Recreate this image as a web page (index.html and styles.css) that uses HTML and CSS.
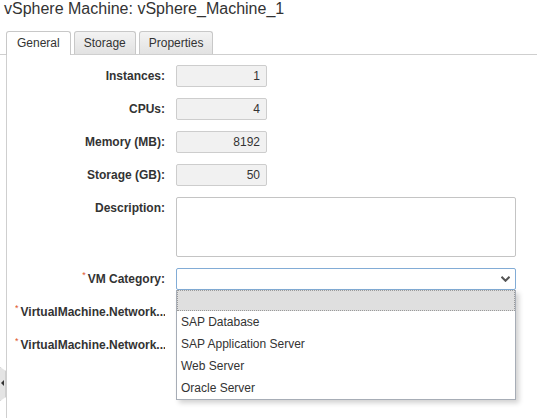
FILE: index.html
```html
<!DOCTYPE html>
<html>
<head>
<meta charset="utf-8">
<link rel="stylesheet" href="styles.css">
</head>
<body>
<div class="page">
  <h1 class="title">vSphere Machine: vSphere_Machine_1</h1>
  <div class="tabs">
    <div class="tab active">General</div>
    <div class="tab">Storage</div>
    <div class="tab">Properties</div>
  </div>
  <div class="panel">
    <div class="form">
      <label class="lbl">Instances:</label>
      <div class="input">1</div>
      <label class="lbl">CPUs:</label>
      <div class="input">4</div>
      <label class="lbl">Memory (MB):</label>
      <div class="input">8192</div>
      <label class="lbl">Storage (GB):</label>
      <div class="input">50</div>
      <label class="lbl">Description:</label>
      <div class="textarea"></div>
      <label class="lbl"><span class="req">*</span>VM Category:</label>
      <div class="select-wrap">
        <div class="select">
          <svg class="chev" width="9" height="6" viewBox="0 0 9 6"><path d="M0.5 0.8 L4.5 4.8 L8.5 0.8" fill="none" stroke="#555" stroke-width="2"/></svg>
        </div>
        <ul class="dropdown">
          <li class="opt empty"></li>
          <li class="opt">SAP Database</li>
          <li class="opt">SAP Application Server</li>
          <li class="opt">Web Server</li>
          <li class="opt">Oracle Server</li>
        </ul>
      </div>
      <label class="lbl"><span class="req">*</span>VirtualMachine.Network...</label>
      <div class="field"></div>
      <label class="lbl"><span class="req">*</span>VirtualMachine.Network...</label>
      <div class="field"></div>
    </div>
  </div>
  <div class="handle"><span class="arrow"></span></div>
</div>
</body>
</html>
```

FILE: styles.css
```css
html, body {
  margin: 0;
  padding: 0;
  background: #fff;
}
body {
  font-family: "Liberation Sans", Arial, sans-serif;
  color: #333;
  font-size: 12px;
}
.page {
  position: relative;
  height: 418px;
  display: flex;
  flex-direction: column;
  overflow: hidden;
}
.title {
  margin: 0;
  padding: 0 4px;
  font-size: 16px;
  font-weight: normal;
  line-height: 18px;
  color: #333;
}
.tabs {
  display: flex;
  gap: 3px;
  margin-top: 13px;
  padding-left: 6px;
  border-bottom: 1px solid #cfcfcf;
}
.tab {
  height: 22px;
  line-height: 22px;
  padding: 0 9px;
  border: 1px solid #c8c8c8;
  border-bottom: none;
  border-radius: 3px 3px 0 0;
  background: linear-gradient(#f3f3f3, #e2e2e2);
  font-size: 12px;
  color: #333;
}
.tab.active {
  background: #fff;
  height: 23px;
  margin-bottom: -1px;
  padding: 0 10px;
}
.panel {
  flex: 1;
  margin-left: 6px;
  border-left: 1px solid #cfcfcf;
  padding-top: 10px;
}
.form {
  display: grid;
  grid-template-columns: 150px 340px;
  column-gap: 11px;
  row-gap: 11px;
  padding-left: 8px;
  align-items: start;
}
.lbl {
  font-weight: bold;
  font-size: 12px;
  line-height: 22px;
  text-align: right;
  white-space: nowrap;
  overflow: hidden;
  color: #333;
}
.req {
  color: #e0542a;
  font-size: 9px;
  font-weight: normal;
  vertical-align: top;
  line-height: 14px;
  margin-right: 2px;
}
.input {
  width: 91px;
  height: 22px;
  box-sizing: border-box;
  border: 1px solid #cdcdcd;
  border-radius: 2px;
  background: #f1f1f1;
  text-align: right;
  padding: 0 6px;
  line-height: 20px;
  font-size: 12px;
  color: #333;
}
.textarea {
  width: 340px;
  height: 60px;
  box-sizing: border-box;
  border: 1px solid #c4c4c4;
  border-radius: 2px;
  background: #fff;
}
.select-wrap {
  position: relative;
  width: 340px;
}
.select {
  height: 22px;
  box-sizing: border-box;
  border: 1px solid #82acd6;
  border-radius: 2px;
  background: #fff;
  display: flex;
  align-items: center;
  justify-content: flex-end;
  padding-right: 5px;
}
.chev {
  display: block;
}
.dropdown {
  position: absolute;
  top: 22px;
  left: 0;
  width: 340px;
  box-sizing: border-box;
  margin: 0;
  padding: 0;
  list-style: none;
  background: #fff;
  border: 1px solid #a7adb6;
  border-top: none;
  box-shadow: 3px 3px 5px rgba(0, 0, 0, 0.18);
  z-index: 2;
}
.opt {
  height: 22px;
  line-height: 22px;
  padding-left: 4px;
  font-size: 12px;
  color: #333;
  white-space: nowrap;
}
.opt.empty {
  height: 21px;
  box-sizing: border-box;
  background: #dfdfdf;
  border: 1px dotted #9a9a9a;
}
.field {
  height: 22px;
}
.handle {
  position: absolute;
  left: 0;
  top: 367px;
  width: 5px;
  height: 32px;
  background: #e4e4e4;
  border: 1px solid #cfcfcf;
  border-left: none;
  clip-path: polygon(0 0, 100% 4px, 100% calc(100% - 4px), 0 100%);
}
.arrow {
  position: absolute;
  left: 1px;
  top: 12px;
  width: 0;
  height: 0;
  border-top: 3px solid transparent;
  border-bottom: 3px solid transparent;
  border-right: 3px solid #333;
}
```
